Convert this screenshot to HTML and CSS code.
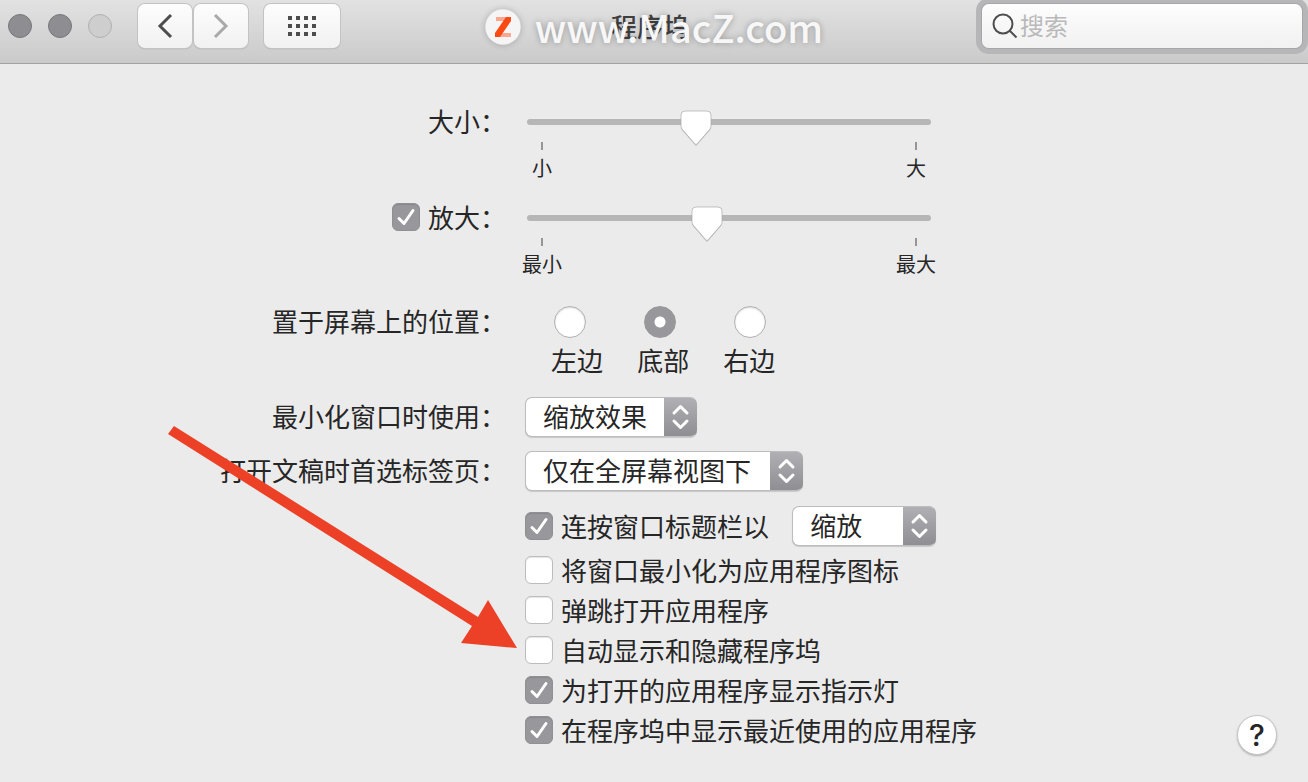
FILE: index.html
```html
<!DOCTYPE html>
<html lang="zh-CN">
<head>
<meta charset="UTF-8" />
<meta name="viewport" content="width=device-width, initial-scale=1.0"/>
<title>程序坞</title>
<link rel="stylesheet" href="styles.css">
</head>
<body>
  <header class="toolbar">
    <div class="lights">
      <span class="light"></span>
      <span class="light"></span>
      <span class="light light-off"></span>
    </div>
    <div class="nav">
      <button class="tool" aria-label="后退">
        <svg width="16" height="26" viewBox="0 0 16 26"><path d="M14 2 3 13l11 11" fill="none" stroke="#4d4d4d" stroke-width="3"/></svg>
      </button>
      <button class="tool" aria-label="前进">
        <svg width="16" height="26" viewBox="0 0 16 26"><path d="m2 2 11 11L2 24" fill="none" stroke="#a9a9a9" stroke-width="3"/></svg>
      </button>
    </div>
    <button class="tool tool-wide" aria-label="显示全部">
      <svg width="28" height="20" viewBox="0 0 28 20" fill="#4d4d4d">
        <path d="M0 0h4v4H0zM8 0h4v4H8zM16 0h4v4h-4zM24 0h4v4h-4zM0 8h4v4H0zM8 8h4v4H8zM16 8h4v4h-4zM24 8h4v4h-4zM0 16h4v4H0zM8 16h4v4H8zM16 16h4v4h-4zM24 16h4v4h-4z"/>
      </svg>
    </button>
    <h1 class="title">程序坞</h1>
    <div class="search">
      <svg class="search-icon" width="26" height="26" viewBox="0 0 26 26" fill="none" stroke="#4d4d4d" stroke-width="2"><circle cx="11" cy="11" r="9.5"/><path d="m17.5 17.5 7 7"/></svg>
      <input type="search" placeholder="搜索" aria-label="搜索" />
    </div>
    <div class="watermark">
      <svg width="36" height="36" viewBox="0 0 36 36">
        <circle cx="18" cy="18" r="17.5" fill="#f5f5f5"/>
        <path d="M11 8h14l-3 4H11zM13 24h13v4H10z" fill="#fca78f"/>
        <path d="M21 8h5v4L15 28h-5v-4z" fill="#fc4a14"/>
      </svg>
      <span>www.MacZ.com</span>
    </div>
  </header>

  <main class="pane">
    <div class="row slider-row">
      <label class="name" for="size">大小：</label>
      <div class="control">
        <input class="slider" id="size" type="range" min="0" max="100" value="41" />
        <div class="scale"><span>小</span><span>大</span></div>
      </div>
    </div>

    <div class="row slider-row">
      <label class="name"><input class="check" type="checkbox" checked />放大：</label>
      <div class="control">
        <input class="slider" type="range" min="0" max="100" value="44" aria-label="放大" />
        <div class="scale"><span>最小</span><span>最大</span></div>
      </div>
    </div>

    <div class="row position-row" role="radiogroup" aria-labelledby="position">
      <span class="name" id="position">置于屏幕上的位置：</span>
      <div class="control">
        <div class="radios">
          <input type="radio" name="position" id="left" />
          <input type="radio" name="position" id="bottom" checked />
          <input type="radio" name="position" id="right" />
        </div>
        <div class="radio-labels">
          <label for="left">左边</label>
          <label for="bottom">底部</label>
          <label for="right">右边</label>
        </div>
      </div>
    </div>

    <div class="row select-row">
      <label class="name" for="effect">最小化窗口时使用：</label>
      <div class="control">
        <select class="popup popup-medium" id="effect">
          <option>缩放效果</option>
          <option>神奇效果</option>
        </select>
      </div>
    </div>

    <div class="row select-row">
      <label class="name" for="tabs">打开文稿时首选标签页：</label>
      <div class="control">
        <select class="popup popup-large" id="tabs">
          <option>仅在全屏幕视图下</option>
          <option>始终</option>
          <option>手动</option>
        </select>
      </div>
    </div>

    <div class="row">
      <div class="control options">
        <div class="option-list">
          <div class="option option-select">
            <label class="option"><input class="check" type="checkbox" checked />连按窗口标题栏以</label>
            <select class="popup popup-small" aria-label="连按窗口标题栏以">
              <option>缩放</option>
              <option>最小化</option>
            </select>
          </div>
          <label class="option"><input class="check" type="checkbox" />将窗口最小化为应用程序图标</label>
          <label class="option"><input class="check" type="checkbox" />弹跳打开应用程序</label>
          <label class="option"><input class="check" type="checkbox" />自动显示和隐藏程序坞</label>
          <label class="option"><input class="check" type="checkbox" checked />为打开的应用程序显示指示灯</label>
          <label class="option"><input class="check" type="checkbox" checked />在程序坞中显示最近使用的应用程序</label>
        </div>
        <button class="help">?</button>
      </div>
    </div>

    <svg class="arrow" width="350" height="224" viewBox="0 0 350 224" aria-hidden="true">
      <path d="M6 0 310 191l10-17 29 48-56-5 11-17L0 8z" fill="#ec4027"/>
    </svg>
  </main>
</body>
</html>
```

FILE: styles.css
```css
:root {
  --bg: #ebebeb;
  --text: #262626;
  --accent: #98979c;
  --accent-grad: linear-gradient(#b1b0b5, #8e8d92);
  --border: #bcbcbc;
  --font: "Noto Sans CJK SC", sans-serif;
}

* {
  box-sizing: border-box;
}

body {
  margin: 0;
  min-height: 100vh;
  font-family: var(--font);
  font-size: 26px;
  line-height: 36px;
  background: var(--bg);
  color: var(--text);
}

input, select, button {
  margin: 0;
  font: inherit;
  color: inherit;
  outline: none;
}

svg {
  display: block;
}

/* toolbar */
.toolbar {
  position: relative;
  display: flex;
  align-items: flex-start;
  height: 64px;
  padding: 4px 6px 0 8px;
  overflow: hidden;
  background: linear-gradient(#e2e2e2, #cacaca);
  border-bottom: 1px solid #a3a3a3;
}

.lights {
  display: flex;
  gap: 16px;
  padding: 10px 26px 0 0;
}

.light {
  width: 24px;
  height: 24px;
  border: 1px solid #77767b;
  border-radius: 50%;
  background: #8e8d92;
}

.light-off {
  border-color: #b0b0b0;
  background: #cecece;
}

.nav {
  display: flex;
  gap: 2px;
  margin-right: 16px;
}

.tool {
  display: flex;
  align-items: center;
  justify-content: center;
  width: 54px;
  height: 44px;
  padding: 0;
  border: none;
  border-radius: 7px;
  background: linear-gradient(#fdfdfd, #f1f1f1);
  box-shadow: 0 0 0 1px #c3c3c3, 0 1px 1px #999;
}

.tool-wide {
  width: 76px;
}

.title {
  flex: 1;
  margin: 0;
  padding: 4px 22px 0 0;
  font-size: 26px;
  font-weight: 500;
  line-height: 36px;
  text-align: center;
  color: #404040;
}

.search {
  display: flex;
  align-items: center;
  gap: 2px;
  width: 320px;
  height: 44px;
  padding-left: 10px;
  border-radius: 7px;
  background: linear-gradient(#fdfdfd, #f1f1f1);
  box-shadow: 0 0 0 1px #a6a6a8, 0 0 0 6px #b6b6b8;
}

.search-icon {
  flex: none;
}

.search input {
  flex: 1;
  min-width: 0;
  padding: 0 0 2px;
  border: none;
  background: none;
  font-size: 24px;
  line-height: 36px;
}

.search input::placeholder {
  color: #b9b9b9;
}

.watermark {
  position: absolute;
  top: 3px;
  left: 0;
  right: 0;
  display: flex;
  align-items: center;
  justify-content: center;
  gap: 14px;
  font-size: 38px;
  font-weight: 500;
  line-height: 48px;
  color: #f7f7f7;
  text-shadow: 0 0 6px rgba(0, 0, 0, 0.3);
  pointer-events: none;
}

.watermark svg {
  border-radius: 50%;
  box-shadow: 0 0 6px rgba(0, 0, 0, 0.2);
}

/* settings */
.pane {
  position: relative;
  padding: 40px 0 24px;
}

.row {
  display: grid;
  grid-template-columns: 39% 1fr;
  column-gap: 15px;
}

.name {
  display: flex;
  align-items: center;
  justify-content: flex-end;
  gap: 8px;
  height: 36px;
  padding: 0 4px 2px 0;
}

.control {
  grid-column: 2;
}

.slider-row {
  height: 96px;
}

.slider {
  -webkit-appearance: none;
  appearance: none;
  display: block;
  width: 404px;
  height: 36px;
  margin-left: 2px;
  background: none;
}

.slider::-webkit-slider-runnable-track {
  height: 6px;
  border-radius: 3px;
  background: #b6b6b6;
}

.slider::-webkit-slider-thumb {
  -webkit-appearance: none;
  width: 32px;
  height: 38px;
  margin-top: -9px;
  background: url("data:image/svg+xml,%3Csvg xmlns='http://www.w3.org/2000/svg' width='32' height='38'%3E%3Cpath d='M5 2h22q4 0 4 4v11q0 2-1 3L17 35q-1 1-2 0L2 20q-1-1-1-3V6q0-4 4-4z' fill='%23999' opacity='.6'/%3E%3Cpath d='M5 1h22q4 0 4 4v11q0 2-1 3L17 34q-1 1-2 0L2 19q-1-1-1-3V5q0-4 4-4z' fill='%23fff' stroke='%23aaa' stroke-width='.7'/%3E%3C/svg%3E") no-repeat;
}

.scale {
  display: flex;
  justify-content: space-between;
  width: 414px;
  margin: 2px 0 0 -3px;
  font-size: 20px;
  line-height: 28px;
}

.scale span {
  width: 40px;
  text-align: center;
}

.scale span::before {
  content: "";
  display: block;
  width: 2px;
  height: 8px;
  margin: 0 auto 4px;
  background: #969696;
}

.position-row {
  padding: 8px 0 19px;
}

.radios {
  display: flex;
  gap: 58px;
  padding: 2px 0 0 29px;
}

.radios input {
  -webkit-appearance: none;
  appearance: none;
  width: 32px;
  height: 32px;
  border: 1px solid #b0b0b0;
  border-radius: 50%;
  background: #fff;
  box-shadow: inset 0 1px 2px rgba(0, 0, 0, 0.15);
}

.radios input:checked {
  border-color: var(--accent);
  background: radial-gradient(circle, #fff 5px, var(--accent) 6px);
  box-shadow: none;
}

.radio-labels {
  display: flex;
  gap: 34px;
  padding: 4px 0 0 26px;
}

.select-row {
  align-items: center;
  padding-bottom: 14px;
}

.popup {
  -webkit-appearance: none;
  appearance: none;
  display: block;
  height: 40px;
  padding: 0 40px 2px 17px;
  border: 1px solid var(--border);
  border-radius: 7px;
  background:
    url("data:image/svg+xml,%3Csvg xmlns='http://www.w3.org/2000/svg' width='33' height='40' fill='none' stroke='%23fff' stroke-width='3' stroke-linecap='round' stroke-linejoin='round'%3E%3Cpath d='m10 16 6.500-6.500L23 16M10 24l6.500 6.500L23 24'/%3E%3C/svg%3E") right center / 33px 40px no-repeat border-box,
    var(--accent-grad) right / 33px 100% no-repeat border-box,
    #fff;
  border-right-color: transparent;
  box-shadow: 0 1px 1px rgba(0, 0, 0, 0.15);
}

.popup-small { width: 144px; }
.popup-medium { width: 172px; }
.popup-large { width: 278px; }

.check {
  -webkit-appearance: none;
  appearance: none;
  flex: none;
  width: 28px;
  height: 28px;
  border: 1px solid var(--border);
  border-radius: 6px;
  background: #fff;
  box-shadow: inset 0 1px 1px rgba(0, 0, 0, 0.1);
}

.check:checked {
  border-color: #908f94;
  background: var(--accent) url("data:image/svg+xml,%3Csvg xmlns='http://www.w3.org/2000/svg' width='28' height='28' fill='none' stroke='%23fff' stroke-width='3' stroke-linecap='round' stroke-linejoin='round'%3E%3Cpath d='m7 15.500 5 5L21 7.500'/%3E%3C/svg%3E") center no-repeat;
}

.options {
  display: flex;
  align-items: flex-end;
  justify-content: space-between;
  padding: 1px 31px 0 0;
}

.option-list {
  display: flex;
  flex-direction: column;
  align-items: flex-start;
  padding-bottom: 5px;
}

.option {
  display: flex;
  align-items: center;
  gap: 8px;
  height: 40px;
}

.option-select {
  gap: 23px;
  margin-bottom: 4px;
}

.help {
  width: 40px;
  height: 40px;
  padding: 0;
  border: 1px solid #c6c6c6;
  border-radius: 50%;
  background: #fff;
  box-shadow: 0 1px 2px rgba(0, 0, 0, 0.25);
  font-family: Inter, sans-serif;
  font-size: 30px;
  font-weight: 500;
  line-height: 36px;
}

/* pointer to the auto-hide option */
.arrow {
  position: absolute;
  top: 362px;
  left: 168px;
  pointer-events: none;
}
```
